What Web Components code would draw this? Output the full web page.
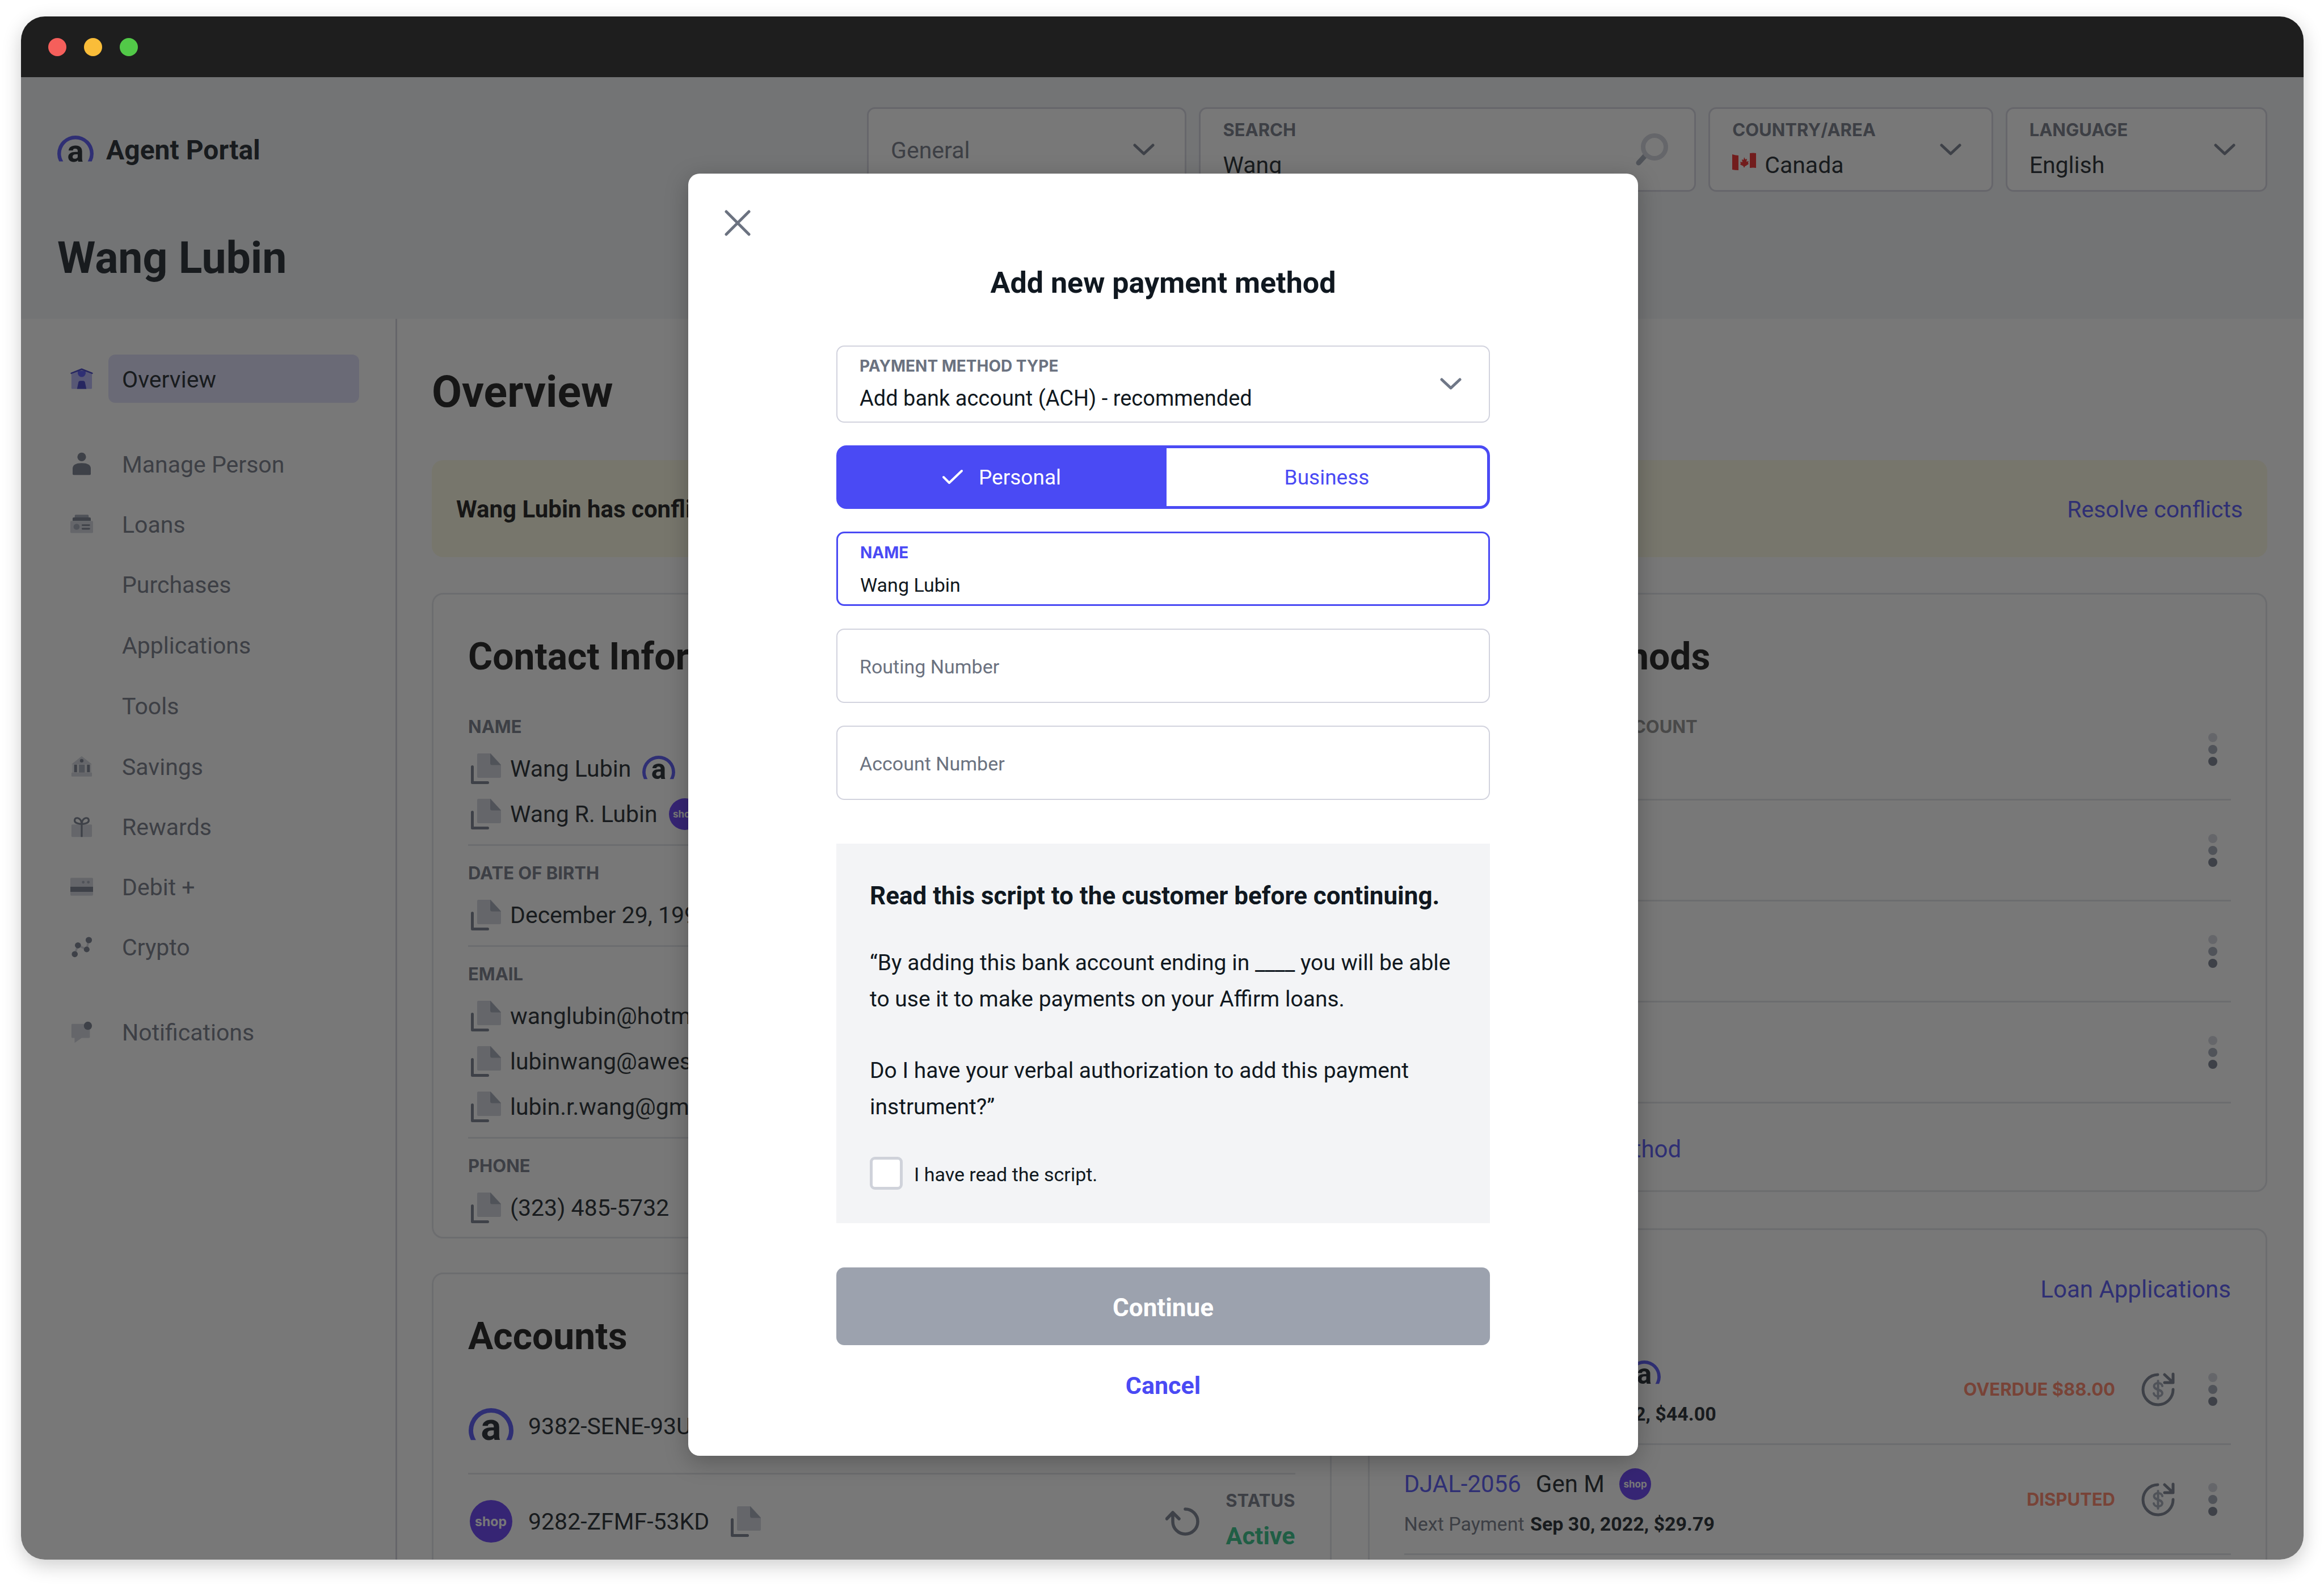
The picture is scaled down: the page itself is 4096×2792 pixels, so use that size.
<!DOCTYPE html>
<html lang="en">
<head>
<meta charset="utf-8">
<title>Agent Portal</title>
<style>
  :root {
    --ink: #101820;
    --head: #0c0c0c;
    --muted: #6b7280;
    --dark: #6f7787;
    --mid: #9ba2b2;
    --light: #d0d3db;
    --brand: #4a4af4;
    --line: #e2e3e8;
    --field: #d2d3de;
    --label-font: Inter, "Liberation Sans", sans-serif;
  }
  html, body { height: 100%; }
  body {
    margin: 0;
    box-sizing: border-box;
    padding: 29px 36px 43px 37px;
    background: #fff;
    color: var(--ink);
    font: 41px/56px Roboto, "Liberation Sans", sans-serif;
    overflow: hidden;
  }
</style>
</head>
<body>
<browser-window>
  <agent-portal></agent-portal>
  <payment-dialog slot="dialog"></payment-dialog>
</browser-window>

<script>
const define = (name, html, setup) => {
  const template = document.createElement('template');
  template.innerHTML = html;
  customElements.define(name, class extends HTMLElement {
    connectedCallback() {
      if (this.shadowRoot) return;
      this.attachShadow({ mode: 'open' }).append(template.content.cloneNode(true));
      if (setup) setup(this, this.shadowRoot);
    }
  });
};

/* ---------- icons ---------- */
const ICONS = {
  chevron: [38, 22, '<path d="M3 3 19 18 35 3" fill="none" stroke="var(--dark)" stroke-width="5" stroke-linecap="round" stroke-linejoin="round"/>'],
  close: [46, 46, '<path d="M3 3 43 43M43 3 3 43" stroke="var(--muted)" stroke-width="5" stroke-linecap="round"/>'],
  check: [38, 28, '<path d="M3 14 13 24 35 3" fill="none" stroke="#fff" stroke-width="4" stroke-linecap="round" stroke-linejoin="round"/>'],
  search: [57, 57, '<path d="M16 40 5 52" stroke="var(--mid)" stroke-width="9" stroke-linecap="round"/><circle cx="33" cy="24" r="20" fill="none" stroke="var(--light)" stroke-width="8"/>'],
  flag: [42, 45, '<path d="M0 3C8 6 14 5 21 3S34-1 42 1V27C34 26 28 27 21 29S8 31 0 30Z" fill="#fff"/><path d="M0 3Q6 5 11 5V31Q5 31 0 30ZM31 1Q37 0 42 1V27Q37 26 31 27Z" fill="#ef1c1c"/><path d="m21 8 2 4 3-1-1 5 4-1-1 3 1 2-6 4h-1v2h-2v-2l-6-3 1-2-1-3 4 1-1-5 3 1z" fill="#ef1c1c"/>'],
  dots: [64, 60, '<circle cx="32" cy="9" r="8" fill="var(--light)"/><circle cx="32" cy="30" r="8" fill="var(--mid)"/><circle cx="32" cy="51" r="8" fill="var(--dark)"/>'],
  copy: [53, 54, '<path d="M13 0H35L53 20V41Q53 43 51 43H13Q11 43 11 41V2Q11 0 13 0Z" fill="var(--light)"/><path d="M34 0 53 20.500H37Q34 20.500 34 17Z" fill="var(--mid)"/><path d="M2.500 23.500V51.500H29.500" fill="none" stroke="var(--dark)" stroke-width="5" stroke-linecap="round" stroke-linejoin="round"/>'],
  refresh: [60, 50, '<path d="M35 3A22 22 0 1 1 13 25V9M2.500 20 13 9 24 20" fill="none" stroke="var(--dark)" stroke-width="5.500" stroke-linecap="round" stroke-linejoin="round"/>'],
  money: [60, 60, '<path d="M29 4A26.500 26.500 0 1 0 56 30M41 4 55 17M56 3V18H41" fill="none" stroke="var(--dark)" stroke-width="5" stroke-linecap="round" stroke-linejoin="round"/><path d="M37 24C36 17 23 17 22.500 24 22.500 32 37 29 37 37 36 44 23 44 22 37M29.500 15V46" fill="none" stroke="var(--mid)" stroke-width="4" stroke-linecap="round"/>'],
  home: [64, 64, '<g transform="scale(2.667)"><path d="M5.200 8 12 5.300 18.800 8V18Q18.800 18.600 18.200 18.600H5.800Q5.200 18.600 5.200 18Z" fill="#b0b0f8"/><path d="M9.400 6.600H14.600V8.400Q14 10.700 12 10.700T9.400 8.400Z" fill="#4a4af4"/><path d="M5.100 8.200 12 5.500 18.900 8.200" fill="none" stroke="#3232c4" stroke-width="1" stroke-linecap="round"/><path d="M8.900 18.600 9.900 14Q10.200 13.200 11 13.200H13Q13.800 13.200 14.100 14L15.100 18.600Z" fill="#3232c4"/></g>'],
  person: [64, 64, '<g transform="scale(2.667)" fill="var(--dark)"><circle cx="12" cy="7.300" r="2.850"/><path d="M6 15Q6 11.300 12 11.300T18 15V18.500Q18 19.200 17.300 19.200H6.700Q6 19.200 6 18.500Z"/></g>'],
  loans: [64, 64, '<g transform="scale(2.667)"><path d="M7.400 7.500V6.400Q7.400 5.700 8.100 5.700H15.900Q16.600 5.700 16.600 6.400V7.500Z" fill="var(--mid)"/><path d="M6 9.800V8.200Q6 7.500 6.700 7.500H17.300Q18 7.500 18 8.200V9.800Z" fill="var(--dark)"/><rect x="4.500" y="9.800" width="15" height="8" rx=".6" fill="var(--light)"/><circle cx="8.600" cy="13.700" r="2" fill="var(--mid)"/><path d="M12.500 12.600H17M12.500 15H17" stroke="var(--dark)" stroke-width="1.100" stroke-linecap="round"/></g>'],
  savings: [64, 64, '<g transform="scale(2.667)"><path d="M5.200 10.600 12 5.200 18.800 10.600Z" fill="var(--light)"/><path d="M5.600 10.600H18.400V16H5.600Z" fill="var(--light)" opacity=".5"/><rect x="5.200" y="16" width="13.600" height="2.700" rx=".5" fill="var(--light)"/><rect x="7" y="10.800" width="1.900" height="5" fill="var(--dark)"/><rect x="15.500" y="10.800" width="1.900" height="5" fill="var(--dark)"/><rect x="10.200" y="10.800" width="3.800" height="5.200" fill="var(--mid)"/><circle cx="12" cy="8.200" r="1.200" fill="var(--dark)"/></g>'],
  rewards: [64, 64, '<g transform="scale(2.667)"><rect x="5.200" y="10.600" width="13.600" height="8.200" rx=".6" fill="var(--light)"/><path d="M12 18.800V10.300C8 10 7.100 9 7.400 7.400S11.200 5.400 12 9.800C12.800 5.400 16.300 5.800 16.600 7.400S16 10 12 10.300" fill="none" stroke="var(--dark)" stroke-width="1.200"/></g>'],
  debit: [64, 64, '<g transform="scale(2.667)"><rect x="4.500" y="6.100" width="15" height="11.800" rx=".7" fill="var(--light)"/><path d="M4.500 12H19.500V15.400H4.500Z" fill="var(--dark)"/><circle cx="13" cy="9" r=".9" fill="var(--mid)"/><circle cx="16.400" cy="9" r=".9" fill="var(--mid)"/></g>'],
  crypto: [64, 64, '<g transform="scale(2.667)"><path d="M7.400 16.800 9.500 11 15.300 13.700 16.600 7.500" fill="none" stroke="var(--light)" stroke-width="1.300"/><g fill="var(--dark)"><circle cx="7.400" cy="16.800" r="2"/><circle cx="9.500" cy="11" r="2"/><circle cx="15.300" cy="13.700" r="1.900"/><circle cx="16.700" cy="7.500" r="2.100"/></g></g>'],
  bell: [64, 64, '<g transform="scale(2.667)"><path d="M5.700 6.700H16.800Q17.400 6.700 17.400 7.300V15.300Q17.400 15.900 16.800 15.900H12L7.300 19.200V15.900H5.700Q5.200 15.900 5.200 15.300V7.300Q5.200 6.700 5.700 6.700Z" fill="var(--light)"/><circle cx="16.100" cy="7.900" r="2.700" fill="var(--dark)"/></g>']
};
define('ui-icon', `<style>:host{display:inline-flex;flex:none}svg{display:block}</style>`, (host, root) => {
  const [w, h, body] = ICONS[host.getAttribute('name')];
  root.innerHTML += `<svg width="${w}" height="${h}" viewBox="0 0 ${w} ${h}" aria-hidden="true">${body}</svg>`;
});

define('affirm-logo', `
<style>:host{display:inline-flex;flex:none;width:var(--w,58px)}svg{display:block;width:100%;overflow:visible}</style>
<svg viewBox="0 0 80 64" role="img" aria-label="Affirm">
  <path d="M4 57Q0 49 0 40A40 40 0 0 1 80 40Q80 49 76 57H67Q72 48 72 40A32 32 0 0 0 8 40Q8 48 13 57Z" fill="var(--brand)"/>
  <text x="40" y="57" text-anchor="middle" font-family="Roboto, sans-serif" font-weight="700" font-size="68" fill="var(--ink)">a</text>
</svg>`);

define('shop-badge', `
<style>:host{display:inline-flex;flex:none;align-items:center;justify-content:center;width:var(--d,56px);height:var(--d,56px);
border-radius:50%;background:#5a31f4;color:#fff;font:700 var(--fs,17px)/2 Inter,sans-serif}</style>shop`);

/* ---------- window ---------- */
define('browser-window', `
<style>
:host{display:flex;flex-direction:column;height:100%;border-radius:42px;overflow:hidden;box-shadow:0 10px 34px rgba(0,0,0,.2);background:#fff}
.bar{flex:none;height:107px;background:#1e1e1e;display:flex;align-items:center;gap:31px;padding-left:48px}
.bar i{width:32px;height:32px;border-radius:50%}
.stage{position:relative;flex:1;min-height:0;overflow:hidden;display:flex}
.page{flex:1;min-width:0;display:flex}
.veil{position:absolute;inset:0;background:rgba(30,30,30,.6);display:flex;justify-content:center;align-items:flex-start;padding:170px 0 0 3px;box-sizing:border-box}
</style>
<div class="bar"><i style="background:#f55f5b"></i><i style="background:#fabd39"></i><i style="background:#52c948"></i></div>
<div class="stage"><div class="page"><slot></slot></div><div class="veil"><slot name="dialog"></slot></div></div>`);

/* ---------- form fields ---------- */
const FIELD_CSS = `
:host{display:block;min-width:0}
.box{box-sizing:border-box;height:100%;display:flex;align-items:flex-start;border:var(--bw,3px) solid var(--field);border-radius:14px;background:#fff;padding:0 var(--pr,53px) 0 39px}
.col{flex:1;min-width:0;display:flex;flex-direction:column;gap:13px;padding-top:var(--pt,14px)}
.val{display:flex;align-items:center;gap:15px}
label{font:700 var(--lab,28px)/40px var(--label-font);color:var(--muted);white-space:nowrap}
input,select{appearance:none;flex:1;min-width:0;width:100%;margin:0;padding:0;border:0;outline:0;background:none;color:var(--ink);
font-family:inherit;font-size:var(--fs,34px);height:var(--lh,48px);line-height:var(--lh,48px)}
input::placeholder{color:var(--muted);opacity:1}
.end{align-self:center}
:host([bare]) .box{align-items:center}
:host([bare]) .col{padding-top:3px}
:host([bare]) select{color:var(--muted)}
:host([active]) .box{border:3px solid var(--brand)}
:host([active]) label{color:var(--brand)}
.end slot{display:flex}`;
define('select-field', `<style>${FIELD_CSS}</style>
<div class="box"><div class="col"><label for="s"></label><div class="val"><slot></slot><select id="s"></select></div></div><ui-icon class="end" name="chevron"></ui-icon></div>`,
(host, root) => {
  const label = root.querySelector('label');
  const select = root.querySelector('select');
  if (host.hasAttribute('bare')) { select.setAttribute('aria-label', host.getAttribute('label')); label.remove(); }
  else label.textContent = host.getAttribute('label');
  select.add(new Option(host.getAttribute('value')));
});
define('text-field', `<style>${FIELD_CSS} :host{--pr:46px}</style>
<div class="box"><div class="col"><label for="t"></label><div class="val"><input id="t" type="text"></div></div><div class="end"><slot></slot></div></div>`,
(host, root) => {
  const label = root.querySelector('label');
  const input = root.querySelector('input');
  if (host.hasAttribute('placeholder')) {
    input.placeholder = host.getAttribute('placeholder');
    input.setAttribute('aria-label', input.placeholder);
    label.remove();
  } else { label.textContent = host.getAttribute('label'); input.value = host.getAttribute('value'); }
});

/* ---------- header ---------- */
define('portal-header', `
<style>
:host{display:block;background:#f3f5f8;padding:53px 64px 59px}
.top{display:flex;align-items:center;justify-content:space-between;margin-bottom:69px}
.brand{display:flex;align-items:center;gap:22px;font-weight:700;font-size:48px;line-height:60px;padding-top:3px;--w:64px}
.fields{display:flex;gap:22px;height:149px;--pt:17px;--fs:41px;--lh:58px;--lab:31px;flex:0 1 2468px}
h1{margin:0;font:700 77px/96px Roboto,sans-serif;color:var(--ink)}
</style>
<div class="top">
  <div class="brand"><affirm-logo></affirm-logo><span>Agent Portal</span></div>
  <div class="fields">
    <select-field bare label="Category" value="General" style="flex:563 1 0"></select-field>
    <text-field label="SEARCH" value="Wang" style="flex:875 1 0"><ui-icon name="search"></ui-icon></text-field>
    <select-field label="COUNTRY/AREA" value="Canada" style="flex:501 1 0"><ui-icon name="flag"></ui-icon></select-field>
    <select-field label="LANGUAGE" value="English" style="flex:461 1 0"></select-field>
  </div>
</div>
<h1>Wang Lubin</h1>`);

/* ---------- sidebar ---------- */
define('nav-item', `
<style>
:host{display:block;margin-bottom:21px}
a{display:flex;align-items:center;gap:5px;color:var(--muted);text-decoration:none}
.ico{width:85px;display:flex;justify-content:center}
.txt{flex:1;line-height:82px;padding:3px 0 0 24px;border-radius:12px}
:host([current]) .txt{background:#dcdcfa;color:var(--ink)}
:host([sub]) .txt{line-height:83px}
:host([group]){margin-bottom:65px}
</style>
<a href="#"><span class="ico"></span><span class="txt"><slot></slot></span></a>`,
(host, root) => {
  const name = host.getAttribute('icon');
  if (name) root.querySelector('.ico').innerHTML = `<ui-icon name="${name}"></ui-icon>`;
  if (host.hasAttribute('current')) root.querySelector('a').setAttribute('aria-current', 'page');
});
define('side-nav', `
<style>:host{display:block;box-sizing:border-box;flex:none;width:663px;padding:63px 64px 0;border-right:3px solid #d0d0dc}</style>
<nav>
  <nav-item icon="home" current group>Overview</nav-item>
  <nav-item icon="person">Manage Person</nav-item>
  <nav-item icon="loans">Loans</nav-item>
  <nav-item sub>Purchases</nav-item>
  <nav-item sub>Applications</nav-item>
  <nav-item sub>Tools</nav-item>
  <nav-item icon="savings">Savings</nav-item>
  <nav-item icon="rewards">Rewards</nav-item>
  <nav-item icon="debit">Debit +</nav-item>
  <nav-item icon="crypto" group>Crypto</nav-item>
  <nav-item icon="bell">Notifications</nav-item>
</nav>`);

/* ---------- cards ---------- */
define('info-card', `
<style>
:host{display:block;border:3px solid var(--line);border-radius:20px;padding:70px 61px 0}
:host([roomy]){padding-bottom:64px}
.head{display:flex;justify-content:space-between;align-items:flex-start;margin-bottom:35px}
h2{margin:0;font:700 66px/80px Roboto,sans-serif;color:var(--head)}
::slotted(a){color:var(--brand);text-decoration:none;font-size:42px;line-height:70px}
</style>
<div class="head"><h2></h2><slot name="action"></slot></div><slot></slot>`,
(host, root) => { root.querySelector('h2').textContent = host.getAttribute('heading'); });

define('info-section', `
<style>
:host{display:block;padding:28px 0 15px;border-bottom:3px solid var(--line)}
:host(:last-of-type){border-bottom:0;padding-bottom:13px}
.label{font:700 31px/40px var(--label-font);color:var(--muted);margin-bottom:12px}
</style>
<div class="label"></div><slot></slot>`,
(host, root) => { root.querySelector('.label').textContent = host.getAttribute('label'); });

define('copy-row', `
<style>
:host{display:flex;align-items:center;box-sizing:border-box;height:80px;padding:4px 0 0 5px}
button{all:unset;display:flex;margin-right:16px}
.tail{display:flex;margin-left:20px}
</style>
<button type="button" aria-label="Copy"><ui-icon name="copy"></ui-icon></button><slot></slot><span class="tail"><slot name="tail"></slot></span>`);

define('account-row', `
<style>
:host{display:flex;align-items:center;box-sizing:border-box;height:168px;border-bottom:3px solid var(--line);--w:79px;--d:75px;--fs:23px}
.logo{width:80px;margin-right:26px;display:flex;justify-content:center}
button{all:unset;display:flex}
.copy{margin-left:38px}
.status{display:flex;flex-direction:column;gap:10px;margin-left:46px;text-align:right}
.push{margin-left:auto}
small{display:block;font:700 31px/40px var(--label-font);color:var(--muted)}
b{display:block;font-size:43px;line-height:64px;color:#24be80}
</style>
<span class="logo"><slot name="logo"></slot></span><slot></slot>
<button class="copy" type="button" aria-label="Copy"><ui-icon name="copy"></ui-icon></button>
<button class="push" type="button" aria-label="Refresh"><ui-icon name="refresh"></ui-icon></button>
<span class="status"><small>STATUS</small><b>Active</b></span>`);

define('method-row', `
<style>
:host{display:flex;justify-content:space-between;box-sizing:border-box;height:178px;border-bottom:3px solid var(--line)}
.label{font:700 31px/40px var(--label-font);color:#8a8a8a;padding:28px 0 0 0}
button{all:unset;display:flex;align-items:center}
</style>
<div class="label"><slot></slot></div><button type="button" aria-label="More"><ui-icon name="dots"></ui-icon></button>`);

define('loan-row', `
<style>
:host{display:flex;align-items:center;box-sizing:border-box;height:194px;border-bottom:3px solid var(--line)}
.what{flex:1}
.one{display:flex;align-items:center;height:86px;gap:26px;font-size:42px}
.one a{color:var(--brand);text-decoration:none}
.two{font-size:34px;line-height:54px;color:var(--muted)}
.two b{color:var(--ink);margin-left:2px}
.flag{font:700 31px/40px var(--label-font);color:#ff7a5c;margin-right:46px}
button{all:unset;display:flex}
.pay{margin-right:34px}
</style>
<div class="what"><div class="one"><a href="#"></a><span class="who"></span><slot></slot></div>
<div class="two">Next Payment <b></b></div></div>
<span class="flag"></span>
<button class="pay" type="button" aria-label="Make payment"><ui-icon name="money"></ui-icon></button>
<button type="button" aria-label="More"><ui-icon name="dots"></ui-icon></button>`,
(host, root) => {
  root.querySelector('a').textContent = host.getAttribute('loan');
  root.querySelector('.who').textContent = host.getAttribute('merchant');
  root.querySelector('b').textContent = host.getAttribute('due');
  root.querySelector('.flag').textContent = host.getAttribute('state');
});

/* ---------- page ---------- */
define('overview-page', `
<style>
:host{display:block;flex:1;min-width:0;box-sizing:border-box;padding:81px 64px 0 61px}
h1{margin:0 0 72px;font:700 77px/96px Roboto,sans-serif;color:var(--head)}
.alert{display:flex;align-items:center;justify-content:space-between;height:171px;box-sizing:border-box;padding:3px 43px 0;border-radius:20px;background:#fcfae0;margin-bottom:63px}
.alert b{color:var(--head);font-size:42px}
.alert a,.add{color:var(--brand);text-decoration:none}
.cols{display:grid;grid-template-columns:minmax(0,1fr) minmax(0,1fr);gap:64px;align-items:start}
.col{display:flex;flex-direction:column;gap:64px}
.col:first-child{gap:60px}
.add{display:block;font-size:42px;line-height:64px;padding:49px 0 40px}
</style>
<h1>Overview</h1>
<div class="alert"><b>Wang Lubin has conflicting information</b><a href="#">Resolve conflicts</a></div>
<div class="cols">
  <div class="col">
    <info-card heading="Contact Information">
      <info-section label="NAME">
        <copy-row>Wang Lubin<affirm-logo slot="tail"></affirm-logo></copy-row>
        <copy-row>Wang R. Lubin<shop-badge slot="tail"></shop-badge></copy-row>
      </info-section>
      <info-section label="DATE OF BIRTH"><copy-row>December 29, 1990</copy-row></info-section>
      <info-section label="EMAIL">
        <copy-row>wanglubin@hotmail.com</copy-row>
        <copy-row>lubinwang@awesome.com</copy-row>
        <copy-row>lubin.r.wang@gmail.com</copy-row>
      </info-section>
      <info-section label="PHONE"><copy-row>(323) 485-5732</copy-row></info-section>
    </info-card>
    <info-card heading="Accounts" roomy>
      <account-row><affirm-logo slot="logo"></affirm-logo>9382-SENE-93UD</account-row>
      <account-row><shop-badge slot="logo"></shop-badge>9282-ZFMF-53KD</account-row>
    </info-card>
  </div>
  <div class="col">
    <info-card heading="Payment Methods">
      <method-row>PREFERRED CHECKING ACCOUNT</method-row>
      <method-row></method-row>
      <method-row></method-row>
      <method-row></method-row>
      <a class="add" href="#">Add new payment method</a>
    </info-card>
    <info-card heading="Loans" roomy>
      <a slot="action" href="#">Loan Applications</a>
      <loan-row loan="DJAL-2055" merchant="Gen Co" due="Aug 30, 2022, $44.00" state="OVERDUE $88.00"><affirm-logo></affirm-logo></loan-row>
      <loan-row loan="DJAL-2056" merchant="Gen M" due="Sep 30, 2022, $29.79" state="DISPUTED"><shop-badge></shop-badge></loan-row>
    </info-card>
  </div>
</div>`);

define('agent-portal', `
<style>
:host{display:flex;flex-direction:column;flex:1;min-width:0}
.body{flex:1;min-height:0;display:flex;overflow:hidden;background:#fff}
</style>
<portal-header></portal-header>
<div class="body"><side-nav></side-nav><overview-page></overview-page></div>`);

/* ---------- dialog ---------- */
define('payment-dialog', `
<style>
:host{display:block;box-sizing:border-box;position:relative;width:1674px;max-width:90%;background:#fff;border-radius:20px;
padding:162px 261px 93px;box-shadow:0 10px 40px rgba(0,0,0,.25);--bw:2px}
button{font-family:inherit;cursor:pointer}
.close{position:absolute;left:64px;top:64px;display:flex;border:0;background:none;padding:0}
h2{margin:0 0 79px;font:700 52px/62px Roboto,sans-serif;text-align:center}
form{display:flex;flex-direction:column;gap:40px}
.type{height:136px;--fs:38px;--pr:48px}
text-field{height:131px}
.seg{display:flex;height:112px}
.seg button{box-sizing:border-box;border:5px solid var(--brand);font-size:37px;padding:0;display:flex;align-items:center;justify-content:center;gap:27px}
.seg .on{flex:0 0 582px;background:var(--brand);color:#fff;border-radius:18px 0 0 18px}
.seg .off{flex:1;background:#fff;color:var(--brand);border-left:0;border-radius:0 18px 18px 0}
.script{background:#f3f4f6;padding:60px 59px 59px;margin:37px 0 38px}
.script h3{margin:0 0 54px;font:700 44px/64px Roboto,sans-serif;white-space:nowrap}
.script p{margin:0 0 62px;font-size:39px;line-height:64px}
.script p:last-of-type{margin-bottom:56px}
.tick{display:flex;align-items:center;gap:20px;font-size:34px;line-height:54px}
.tick span{padding-top:4px}
.tick input{appearance:none;box-sizing:border-box;margin:0;width:58px;height:58px;border:5px solid #cfd2da;border-radius:9px;background:#fff}
.go{height:137px;border:0;border-radius:14px;background:#9ca2ae;color:#fff;font-weight:700;font-size:44px;padding:4px 0 0}
.cancel{align-self:center;border:0;background:none;padding:0;color:var(--brand);font-weight:700;font-size:43px;line-height:62px}
</style>
<button class="close" type="button" aria-label="Close"><ui-icon name="close"></ui-icon></button>
<h2>Add new payment method</h2>
<form>
  <select-field class="type" label="PAYMENT METHOD TYPE" value="Add bank account (ACH) - recommended"></select-field>
  <div class="seg"><button type="button" class="on" aria-pressed="true"><ui-icon name="check"></ui-icon>Personal</button><button type="button" class="off" aria-pressed="false">Business</button></div>
  <text-field active label="NAME" value="Wang Lubin"></text-field>
  <text-field placeholder="Routing Number" bare></text-field>
  <text-field placeholder="Account Number" bare></text-field>
  <div class="script">
    <h3>Read this script to the customer before continuing.</h3>
    <p>“By adding this bank account ending in ____ you will be able to use it to make payments on your Affirm loans.</p>
    <p>Do I have your verbal authorization to add this payment instrument?”</p>
    <label class="tick"><input type="checkbox"><span>I have read the script.</span></label>
  </div>
  <button class="go" type="button">Continue</button>
  <button class="cancel" type="button">Cancel</button>
</form>`);
</script>
</body>
</html>
